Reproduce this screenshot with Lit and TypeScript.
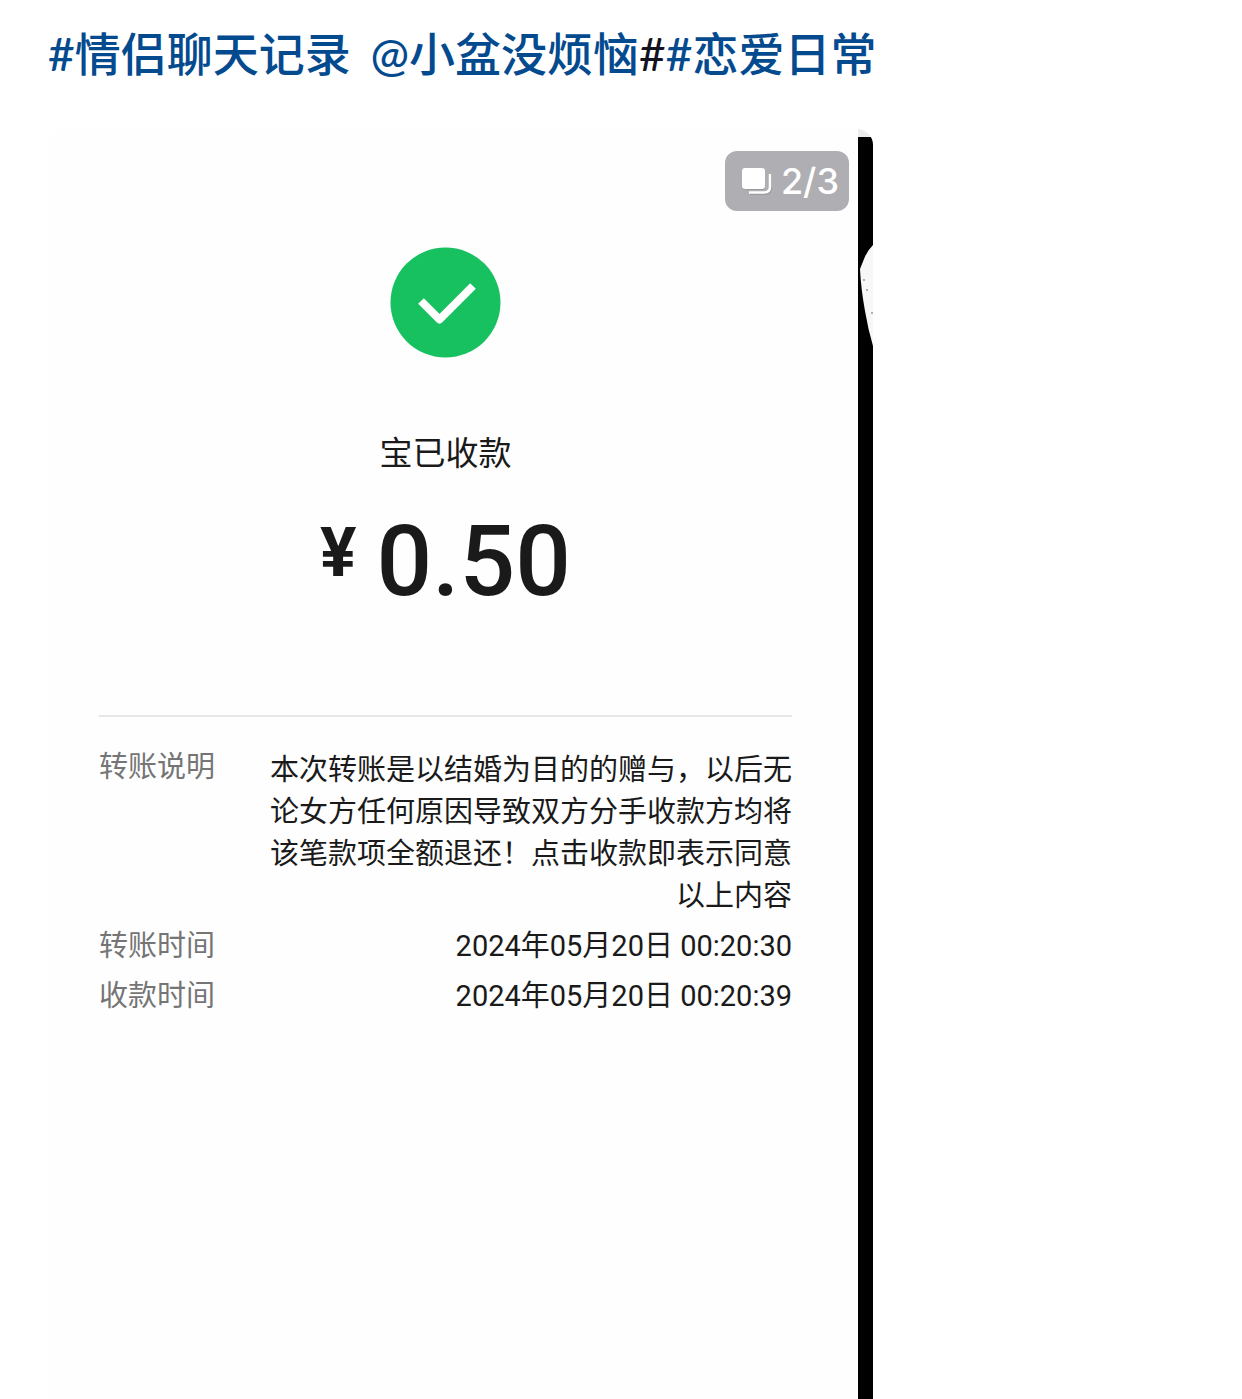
import { LitElement, html, css } from "lit";
import { customElement } from "lit/decorators.js";

interface DetailRow {
  label: string;
  value: string;
  long?: boolean;
}

const ROWS: DetailRow[] = [
  {
    label: "转账说明",
    value:
      "本次转账是以结婚为目的的赠与，以后无论女方任何原因导致双方分手收款方均将该笔款项全额退还！点击收款即表示同意以上内容",
    long: true,
  },
  { label: "转账时间", value: "2024年05月20日 00:20:30" },
  { label: "收款时间", value: "2024年05月20日 00:20:39" },
];

@customElement("transfer-receipt")
export class TransferReceipt extends LitElement {
  static styles = css`
    :host {
      display: flex;
      flex-direction: column;
      align-items: center;
      padding: 118px 66px 48px 51px;
      box-sizing: border-box;
      color: #1a1a1a;
      font-family: Roboto, "Noto Sans CJK SC", sans-serif;
    }
    .check {
      display: block;
      width: 111px;
      height: 111px;
    }
    .status {
      margin: 72px 0 0;
      font-size: 33px;
      line-height: 48px;
      font-weight: 400;
    }
    .amount {
      display: flex;
      align-items: flex-start;
      gap: 20px;
      margin: 24px 0 0;
      font-weight: 500;
    }
    .currency {
      font-size: 68px;
      line-height: 102px;
      font-weight: 700;
    }
    .figure {
      font-size: 98px;
      line-height: 120px;
    }
    .details {
      align-self: stretch;
      display: flex;
      flex-direction: column;
      gap: 8px;
      margin: 93px 0 0;
      padding-top: 29px;
      border-top: 2px solid #e6e6e6;
      font-size: 29px;
      line-height: 42px;
    }
    .row {
      display: flex;
      justify-content: space-between;
      gap: 48px;
    }
    .label {
      flex: none;
      color: #757575;
    }
    .value {
      margin: 0;
      max-width: 522px;
      text-align: right;
    }
    .long {
      padding-top: 3px;
    }
  `;

  render() {
    return html`
      <svg class="check" viewBox="0 0 111 111" aria-hidden="true">
        <circle cx="55.5" cy="55.5" r="55" fill="#18c160"></circle>
        <path d="M31 54L49.500 72.500L83 39" fill="none" stroke="#fff" stroke-width="8" stroke-linejoin="round"></path>
      </svg>
      <h2 class="status">宝已收款</h2>
      <p class="amount"><span class="currency">¥</span><span class="figure">0.50</span></p>
      <dl class="details">
        ${ROWS.map(
          (r) => html`<div class="row">
            <dt class="label">${r.label}</dt>
            <dd class="value ${r.long ? "long" : ""}">${r.value}</dd>
          </div>`
        )}
      </dl>
    `;
  }
}

@customElement("app-root")
export class AppRoot extends LitElement {
  static styles = css`
    :host {
      display: flex;
      flex-direction: column;
      box-sizing: border-box;
      min-height: 100vh;
      padding: 20px 48px 0;
      background: #fff;
      font-family: Inter, "Noto Sans CJK SC", sans-serif;
    }
    .caption {
      margin: 0;
      font-family: Lato, "Noto Sans CJK SC", sans-serif;
      font-size: 46px;
      line-height: 68px;
      font-weight: 400;
      color: #13131f;
    }
    .caption a {
      color: #044a8f;
      font-weight: 500;
      text-decoration: none;
    }
    .mention {
      margin-left: 8px;
    }
    .gallery {
      position: relative;
      flex: 1;
      display: flex;
      box-sizing: border-box;
      width: 100%;
      max-width: 825px;
      margin-top: 41px;
      border-radius: 16px 16px 0 0;
      overflow: hidden;
      background: #fefefe;
    }
    .current {
      flex: 1;
      min-width: 0;
    }
    .next {
      flex: none;
      width: 15px;
      background: linear-gradient(#ececec 8px, #000 8px);
    }
    .edge {
      display: block;
      width: 15px;
      height: 220px;
    }
    .counter {
      position: absolute;
      top: 22px;
      right: 24px;
      display: flex;
      align-items: center;
      gap: 8px;
      box-sizing: border-box;
      height: 60px;
      padding: 0 10px 0 16px;
      border-radius: 12px;
      background: #afaeb3;
      color: #fff;
      font-size: 36px;
      font-weight: 500;
    }
    .stack {
      width: 32px;
      height: 32px;
    }
  `;

  render() {
    return html`
      <p class="caption"><a href="#chat">#情侣聊天记录</a> <a class="mention" href="#user">@小盆没烦恼</a>#<a href="#love">#恋爱日常</a></p>
      <section class="gallery">
        <transfer-receipt class="current"></transfer-receipt>
        <div class="next">
          <svg class="edge" viewBox="0 0 15 220" aria-hidden="true">
            <path d="M15 116Q9 122 6 130L2 140Q3 160 7 182Q10 200 15 217Z" fill="#f7f7f7"></path>
            <g fill="#999"><circle cx="6" cy="151" r="1"></circle><circle cx="9" cy="161" r="1"></circle><circle cx="14" cy="184" r="1"></circle></g>
          </svg>
        </div>
        <div class="counter">
          <svg class="stack" viewBox="0 0 32 32" aria-hidden="true">
            <path d="M29.500 9.500V22.500Q29.500 28.500 23.500 28.500H9" fill="none" stroke="#77777c" stroke-opacity=".35" stroke-width="3"></path>
            <rect x="1" y="4" width="23" height="21" rx="3" fill="#77777c" fill-opacity=".35"></rect>
            <rect x="1" y="3" width="23" height="21" rx="3" fill="#fff"></rect>
            <path d="M29 9V21.500Q29 27.500 23 27.500H8" fill="none" stroke="#fff" stroke-width="2.500"></path>
          </svg>
          <span>2/3</span>
        </div>
      </section>
    `;
  }
}
